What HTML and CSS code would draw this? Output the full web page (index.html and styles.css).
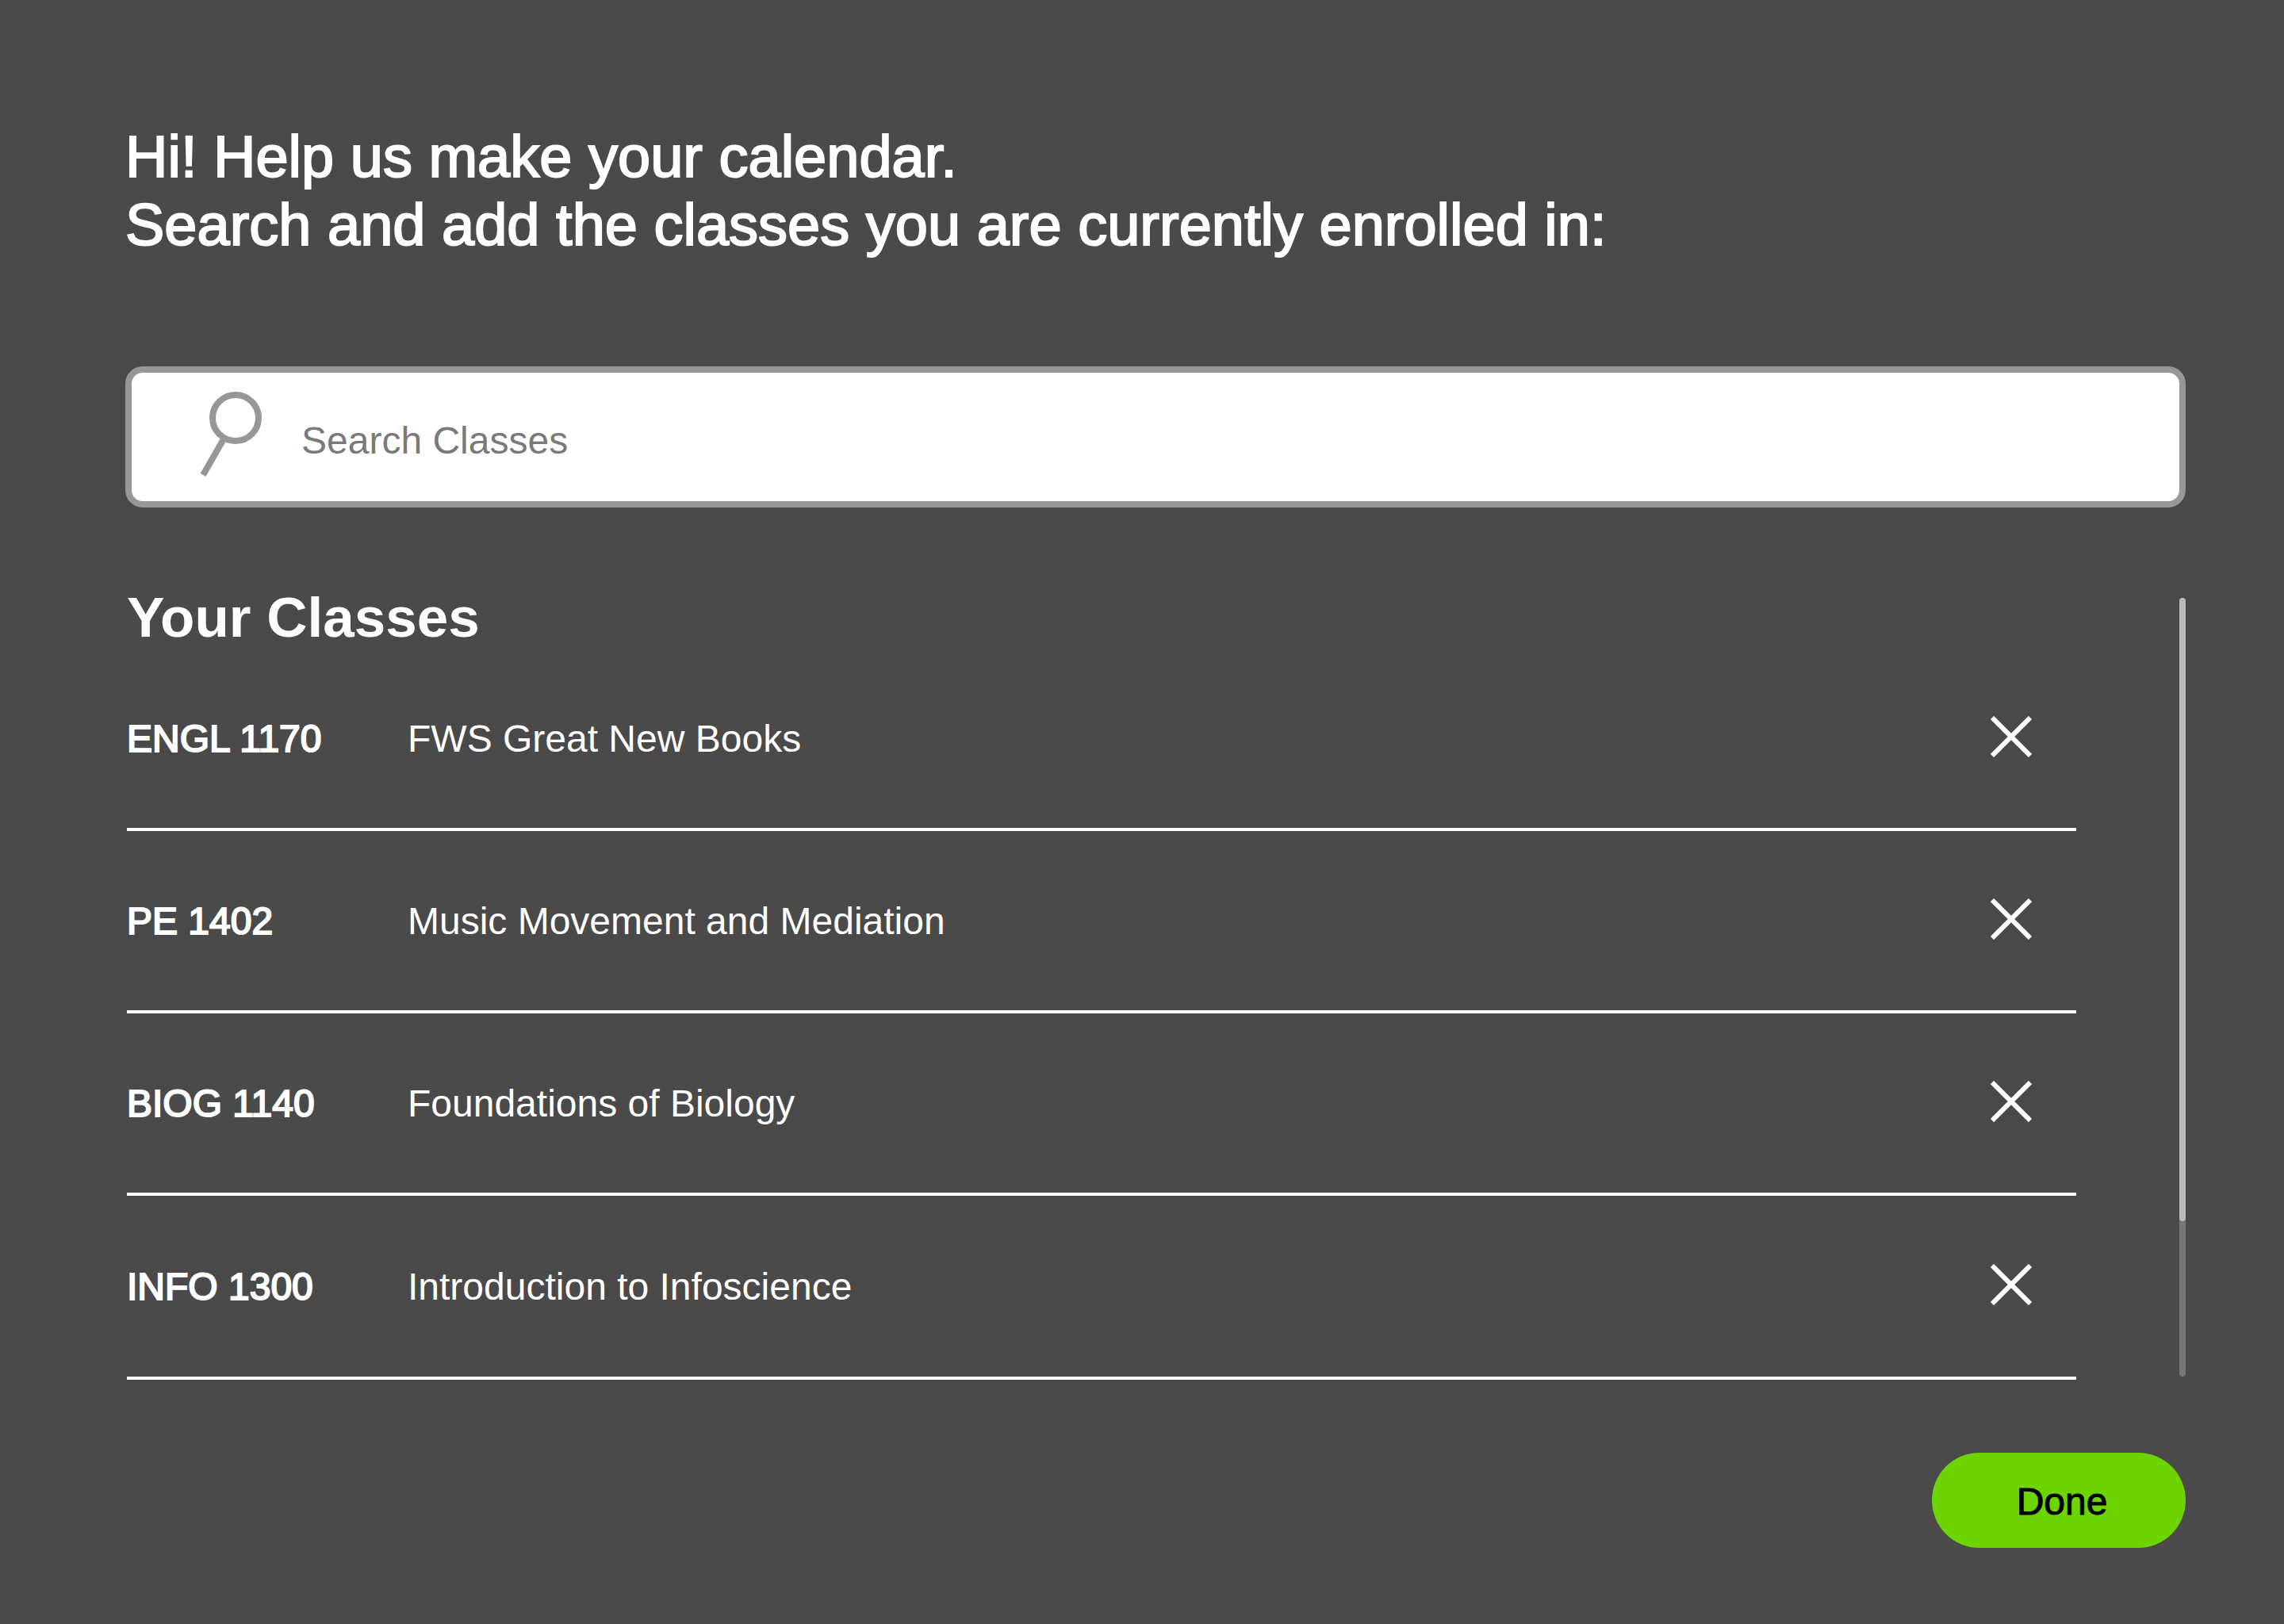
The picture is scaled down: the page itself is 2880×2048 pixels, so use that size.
FILE: index.html
```html
<!DOCTYPE html>
<html lang="en">
<head>
<meta charset="utf-8">
<meta name="viewport" content="width=device-width, initial-scale=1">
<title>Add your classes</title>
<link rel="stylesheet" href="styles.css">
</head>
<body>
<svg class="sprite" aria-hidden="true">
  <symbol id="cross" viewBox="0 0 52 52">
    <path d="M2 2L50 50M50 2L2 50" fill="none" stroke="currentColor" stroke-width="6"/>
  </symbol>
</svg>
<main class="page">
  <h1 class="intro">Hi! Help us make your calendar.<br>Search and add the classes you are currently enrolled in:</h1>

  <form class="search" role="search">
    <label class="search-label" for="class-search" aria-label="Search classes">
      <svg class="search-icon" viewBox="0 0 80 110" aria-hidden="true">
        <g fill="none" stroke="currentColor" stroke-width="8">
          <circle cx="45" cy="35" r="29"/>
          <path d="M31 60L4 107"/>
        </g>
      </svg>
    </label>
    <input class="search-input" id="class-search" type="text" placeholder="Search Classes">
  </form>

  <section class="classes" aria-labelledby="classes-title">
    <div class="list">
      <h2 class="title" id="classes-title">Your Classes</h2>
      <table class="table">
        <tbody>
          <tr>
            <th class="code" scope="row">ENGL 1170</th>
            <td class="name">FWS Great New Books</td>
            <td class="action"><button class="remove" type="button" aria-label="Remove ENGL 1170"><svg class="cross"><use href="#cross"/></svg></button></td>
          </tr>
          <tr>
            <th class="code" scope="row">PE 1402</th>
            <td class="name">Music Movement and Mediation</td>
            <td class="action"><button class="remove" type="button" aria-label="Remove PE 1402"><svg class="cross"><use href="#cross"/></svg></button></td>
          </tr>
          <tr>
            <th class="code" scope="row">BIOG 1140</th>
            <td class="name">Foundations of Biology</td>
            <td class="action"><button class="remove" type="button" aria-label="Remove BIOG 1140"><svg class="cross"><use href="#cross"/></svg></button></td>
          </tr>
          <tr>
            <th class="code" scope="row">INFO 1300</th>
            <td class="name">Introduction to Infoscience</td>
            <td class="action"><button class="remove" type="button" aria-label="Remove INFO 1300"><svg class="cross"><use href="#cross"/></svg></button></td>
          </tr>
        </tbody>
      </table>
    </div>
    <div class="track"><div class="thumb"></div></div>
  </section>

  <div class="footer">
    <button class="done" type="button">Done</button>
  </div>
</main>
</body>
</html>
```
FILE: styles.css
```css
* {
  box-sizing: border-box;
}

body {
  margin: 0;
  background: #4a4a4a;
  color: #fff;
  font-family: "Liberation Sans", Arial, sans-serif;
  font-size: 48px;
  line-height: 56px;
}

.sprite {
  display: block;
  width: 0;
  height: 0;
}

.page {
  padding: 155px 124px 96px 158px;
}

.intro {
  margin: 0 0 135px;
  font-size: 74px;
  font-weight: 400;
  line-height: 86px;
  -webkit-text-stroke: 2px currentColor;
}

.search {
  display: flex;
  align-items: center;
  height: 178px;
  border: 8px solid #979797;
  border-radius: 22px;
  background: #fff;
}

.search-label {
  flex: none;
  padding: 0 48px 8px 86px;
  color: #979797;
}

.search-icon {
  display: block;
  width: 80px;
  height: 110px;
}

.search-input {
  flex: 1;
  min-width: 0;
  height: 100%;
  padding: 8px 0 0;
  border: 0;
  outline: 0;
  background: none;
  color: #4a4a4a;
  font: inherit;
}

.search-input::placeholder {
  color: #7a7a7a;
  opacity: 1;
}

.classes {
  display: flex;
  gap: 130px;
  padding: 96px 0 92px 2px;
}

.list {
  flex: 1;
}

.title {
  margin: 0;
  padding-top: 4px;
  font-size: 71px;
  font-weight: 700;
  line-height: 78px;
}

.table {
  width: 100%;
  border-spacing: 0;
  table-layout: fixed;
}

.table td,
.table th {
  height: 230px;
  padding: 2px 0 0;
  border-bottom: 4px solid #fff;
  text-align: left;
  vertical-align: middle;
}

.table tr:last-child > * {
  height: 232px;
}

.table .code {
  width: 354px;
  font-weight: 400;
  -webkit-text-stroke: 2px currentColor;
}

.table .action {
  width: 108px;
  padding: 0 0 4px;
}

.remove {
  display: block;
  padding: 0;
  border: 0;
  background: none;
  color: #fff;
  cursor: pointer;
}

.cross {
  display: block;
  width: 52px;
  height: 52px;
}

.track {
  flex: none;
  width: 8px;
  margin: 18px 0 4px;
  border-radius: 4px;
  background: #777;
}

.thumb {
  height: 80%;
  border-radius: 4px;
  background: #bbb;
}

.footer {
  display: flex;
  justify-content: flex-end;
}

.done {
  width: 320px;
  height: 120px;
  padding: 4px 0 0 8px;
  border: 0;
  border-radius: 60px;
  background: #6dd400;
  color: #000;
  font: inherit;
  -webkit-text-stroke: 1px currentColor;
  cursor: pointer;
}
```
